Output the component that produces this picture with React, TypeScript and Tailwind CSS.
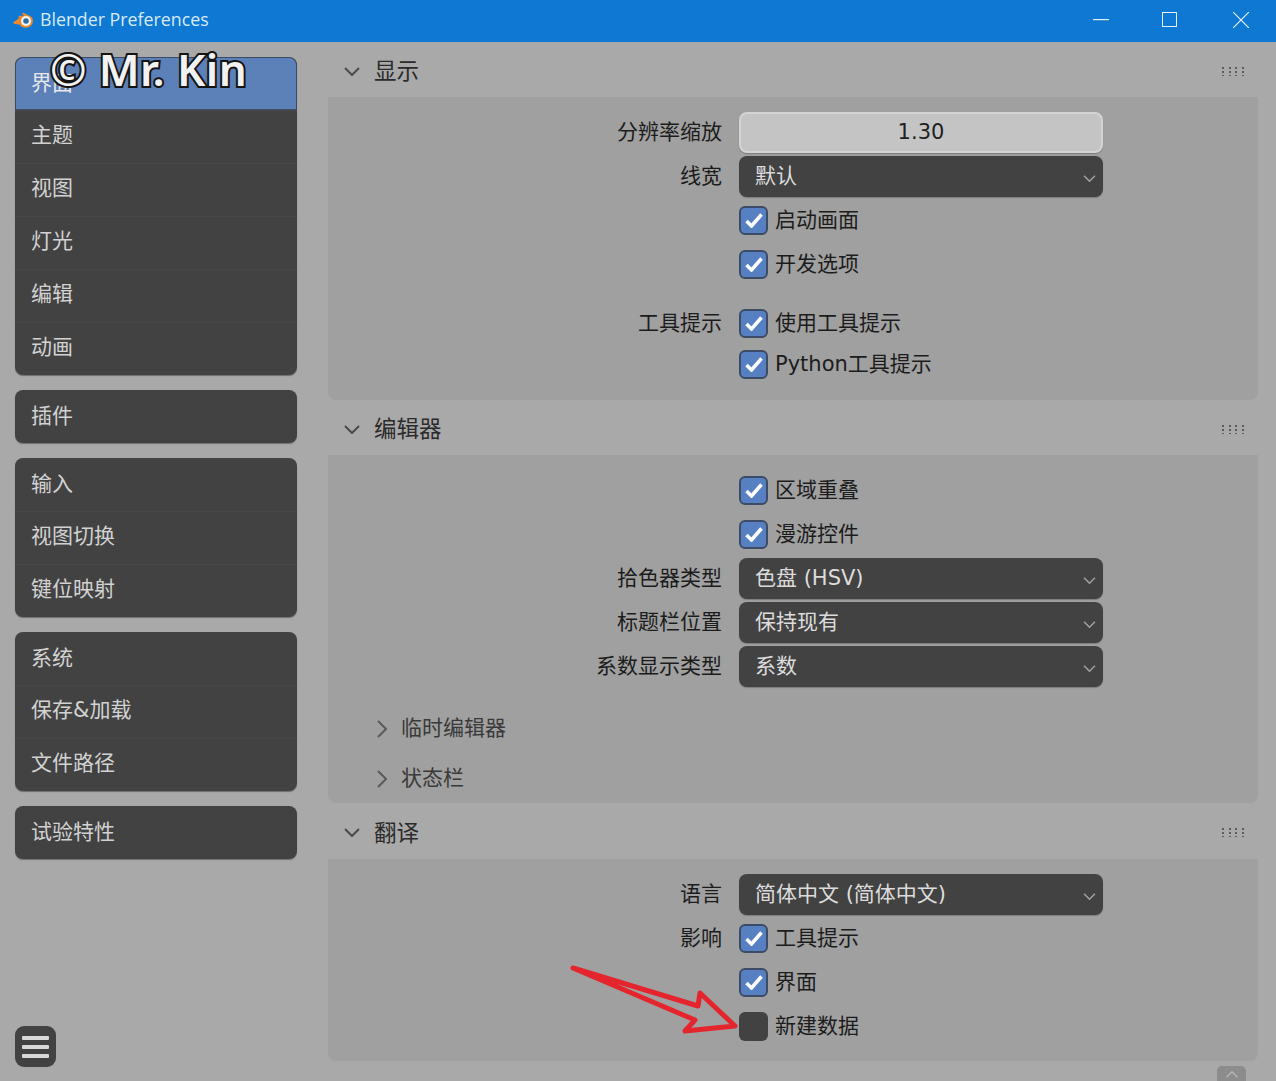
import { ReactNode } from 'react';

const cjk = "font-['DejaVu_Sans','Noto_Sans_CJK_SC',sans-serif]";

type NavGroup = { items: string[] };

const navGroups: NavGroup[] = [
  { items: ['界面', '主题', '视图', '灯光', '编辑', '动画'] },
  { items: ['插件'] },
  { items: ['输入', '视图切换', '键位映射'] },
  { items: ['系统', '保存&加载', '文件路径'] },
  { items: ['试验特性'] },
];

function BlenderLogo() {
  return (
    <svg width="22" height="18" viewBox="0 0 22 18" className="shrink-0">
      <path d="M1 11.5 L8 6.5 L5.5 6.5 L7.5 4.8 L12 4.8 L9.5 2 L12 2 L19 5.5 C22 8 21.5 13 18 15.5 C14.5 17.8 9.5 17 7.5 13.5 L2.5 13 Z" fill="#ea8a2c" />
      <circle cx="14" cy="10" r="5" fill="#f4f4f4" />
      <circle cx="14" cy="10" r="2.8" fill="#2b6ea6" />
    </svg>
  );
}

function Chevron({ dir = 'down', className = '' }: { dir?: 'down' | 'right' | 'up'; className?: string }) {
  const d = dir === 'down' ? 'M1 1 L8 8 L15 1' : dir === 'right' ? 'M1 1 L9 9 L1 17' : 'M1 8 L8 1 L15 8';
  const size = dir === 'right' ? { width: 10, height: 18 } : { width: 16, height: 9 };
  return (
    <svg {...size} viewBox={`0 0 ${size.width} ${size.height}`} fill="none" stroke="currentColor" strokeWidth="2" className={className}>
      <path d={d} />
    </svg>
  );
}

function Grip() {
  const xs = [1, 8, 14, 21];
  const ys = [1, 5, 9];
  return (
    <svg width="23" height="10" viewBox="0 0 23 10" className="mt-[2px] shrink-0">
      {xs.map((x) => ys.map((y) => <rect key={`${x}-${y}`} x={x} y={y} width="2" height="2" fill="#5c5c5c" />))}
    </svg>
  );
}

function Row({ label, height = 'h-[44px]', extra = '', children }: { label?: string; height?: string; extra?: string; children: ReactNode }) {
  return (
    <div className={`grid grid-cols-[394px_364px] gap-x-[17px] items-center ${height} ${extra}`}>
      <div className="text-right text-[21px] leading-none text-[#1c1c1c]">{label}</div>
      <div>{children}</div>
    </div>
  );
}

function Dropdown({ value }: { value: string }) {
  return (
    <div className="flex h-[41px] items-center justify-between rounded-[8px] bg-[#424242] pl-[16px] pr-[7px] text-[21px] leading-none text-[#dcdcdc] shadow-[0_1px_1px_#7c7c7c]">
      <span>{value}</span>
      <Chevron className="mt-[4px] h-[7px] w-[13px] text-[#a0a0a0]" />
    </div>
  );
}

function Check({ label, checked = true }: { label: string; checked?: boolean }) {
  return (
    <div className="flex items-center gap-[7px]">
      {checked ? (
        <span className="flex h-[29px] w-[29px] items-center justify-center rounded-[6px] border-2 border-[#3d4c66] bg-[#5680c2]">
          <svg width="18" height="15" viewBox="0 0 18 15" fill="none" stroke="#ffffff" strokeWidth="3.5">
            <path d="M1.5 8 L6.5 13 L16.5 1.5" />
          </svg>
        </span>
      ) : (
        <span className="h-[29px] w-[29px] rounded-[6px] bg-[#424242]" />
      )}
      <span className="text-[21px] leading-none text-[#1c1c1c]">{label}</span>
    </div>
  );
}

function Section({ title, headerHeight, children, bodyClass }: { title: string; headerHeight: string; children: ReactNode; bodyClass: string }) {
  return (
    <section>
      <div className={`flex items-center justify-between pl-[15px] pr-[14px] ${headerHeight}`}>
        <div className="flex items-center gap-[13px]">
          <Chevron className="mt-[3px] h-[9px] w-[18px] text-[#4a4a4a]" />
          <span className="pt-[4px] text-[22.5px] leading-none text-[#2b2b2b]">{title}</span>
        </div>
        <Grip />
      </div>
      <div className={`rounded-b-[8px] bg-[#a0a0a0] ${bodyClass}`}>{children}</div>
    </section>
  );
}

function SubPanel({ title, height }: { title: string; height: string }) {
  return (
    <div className={`flex items-center gap-[14px] pl-[49px] text-[#3a3a3a] ${height}`}>
      <Chevron dir="right" className="text-[#5a5a5a]" />
      <span className="text-[21px] leading-none">{title}</span>
    </div>
  );
}

export default function App() {
  return (
    <div className={`relative h-[1081px] w-[1276px] overflow-hidden bg-[#a9a9a9] ${cjk}`}>
      {/* title bar */}
      <header className="flex h-[42px] items-center justify-between bg-[#0e78d2] pb-[3px] pl-[12px] text-white">
        <div className="flex items-center gap-[6px]">
          <BlenderLogo />
          <span className="font-['Open_Sans',sans-serif] text-[17.8px] text-[#d8eafa]">Blender Preferences</span>
        </div>
        <div className="flex items-center">
          <svg width="16" height="2" viewBox="0 0 16 2" className="mr-[53px]">
            <rect width="16" height="1.2" fill="#e6f1fb" />
          </svg>
          <span className="mr-[56px] h-[15px] w-[15px] border border-[#e6f1fb]" />
          <svg width="16" height="16" viewBox="0 0 16 16" stroke="#e6f1fb" strokeWidth="1.2" className="mr-[27px]">
            <path d="M0 0 L16 16 M16 0 L0 16" />
          </svg>
        </div>
      </header>

      <div className="flex">
        {/* sidebar */}
        <aside className="ml-[15px] mr-[31px] mt-[15px] flex w-[282px] flex-col gap-[15px]">
          {navGroups.map((group, gi) => (
            <nav key={gi} className="overflow-hidden rounded-[8px] bg-[#424242] shadow-[0_1px_1px_#6e6e6e]">
              {group.items.map((item, i) => {
                const active = item === '界面';
                return (
                  <div
                    key={item}
                    className={`flex h-[53px] items-center text-[21px] leading-none ${
                      active
                        ? 'rounded-t-[8px] border border-[#3d4c66] bg-[#5c80b8] pl-[15px] text-[#e8e8e8]'
                        : `pl-[16px] text-[#d2d2d2] ${i > 0 ? 'border-t border-[#484848] pb-[3px]' : ''}`
                    }`}
                  >
                    {item}
                  </div>
                );
              })}
            </nav>
          ))}
        </aside>

        {/* main panels */}
        <main className="w-[930px]">
          <Section title="显示" headerHeight="h-[55px]" bodyClass="pt-[13px] pb-[16px]">
            <Row label="分辨率缩放">
              <div className="flex h-[41px] items-center justify-center rounded-[8px] border-2 border-[#d4d4d4] bg-[#c4c4c4] text-[21px] leading-none text-[#1f1f1f] shadow-[0_1px_1px_#7c7c7c]">
                1.30
              </div>
            </Row>
            <Row label="线宽">
              <Dropdown value="默认" />
            </Row>
            <Row>
              <Check label="启动画面" />
            </Row>
            <Row>
              <Check label="开发选项" />
            </Row>
            <Row label="工具提示" height="h-[42px]" extra="mt-[16px]">
              <Check label="使用工具提示" />
            </Row>
            <Row height="h-[40px]">
              <Check label="Python工具提示" />
            </Row>
          </Section>

          <Section title="编辑器" headerHeight="h-[55px]" bodyClass="pt-[13px]">
            <Row>
              <Check label="区域重叠" />
            </Row>
            <Row>
              <Check label="漫游控件" />
            </Row>
            <Row label="拾色器类型">
              <Dropdown value="色盘 (HSV)" />
            </Row>
            <Row label="标题栏位置">
              <Dropdown value="保持现有" />
            </Row>
            <Row label="系数显示类型">
              <Dropdown value="系数" />
            </Row>
            <div className="mt-[15px]">
              <SubPanel title="临时编辑器" height="h-[51px]" />
              <SubPanel title="状态栏" height="h-[49px]" />
            </div>
          </Section>

          <Section title="翻译" headerHeight="h-[56px]" bodyClass="pt-[13px] pb-[13px]">
            <Row label="语言">
              <Dropdown value="简体中文 (简体中文)" />
            </Row>
            <Row label="影响">
              <Check label="工具提示" />
            </Row>
            <Row>
              <Check label="界面" />
            </Row>
            <Row>
              <Check label="新建数据" checked={false} />
            </Row>
          </Section>
        </main>
      </div>

      {/* preferences menu button */}
      <div className="absolute left-[15px] top-[1026px] flex h-[41px] w-[41px] flex-col items-center justify-center gap-[5px] rounded-[9px] bg-[#424242]">
        <span className="h-[4px] w-[27px] rounded-[1px] bg-[#d8d8d8]" />
        <span className="h-[4px] w-[27px] rounded-[1px] bg-[#d8d8d8]" />
        <span className="h-[4px] w-[27px] rounded-[1px] bg-[#d8d8d8]" />
      </div>

      {/* scroll tab */}
      <div className="absolute left-[1217px] top-[1066px] flex h-[15px] w-[29px] items-start justify-center rounded-t-[5px] bg-[#8c8c8c] pt-[5px]">
        <Chevron dir="up" className="h-[7px] w-[14px] text-[#b4b4b4]" />
      </div>

      {/* watermark */}
      <div className="absolute left-[50px] top-[41px] whitespace-nowrap font-['Noto_Sans',sans-serif] text-[44px] font-semibold leading-[56px] tracking-[0.4px] text-[#f2f2f2] [-webkit-text-stroke:4px_#141414] [paint-order:stroke_fill]">
        © Mr. Kin
      </div>

      {/* red arrow annotation */}
      <svg width="180" height="80" viewBox="0 0 180 80" fill="none" className="absolute left-[565px] top-[960px]">
        <path d="M8 8 L133 46 L135 33 L170 66 L120 71 L130 60 Z" stroke="#e5252e" strokeWidth="5" strokeLinejoin="round" />
      </svg>
    </div>
  );
}
